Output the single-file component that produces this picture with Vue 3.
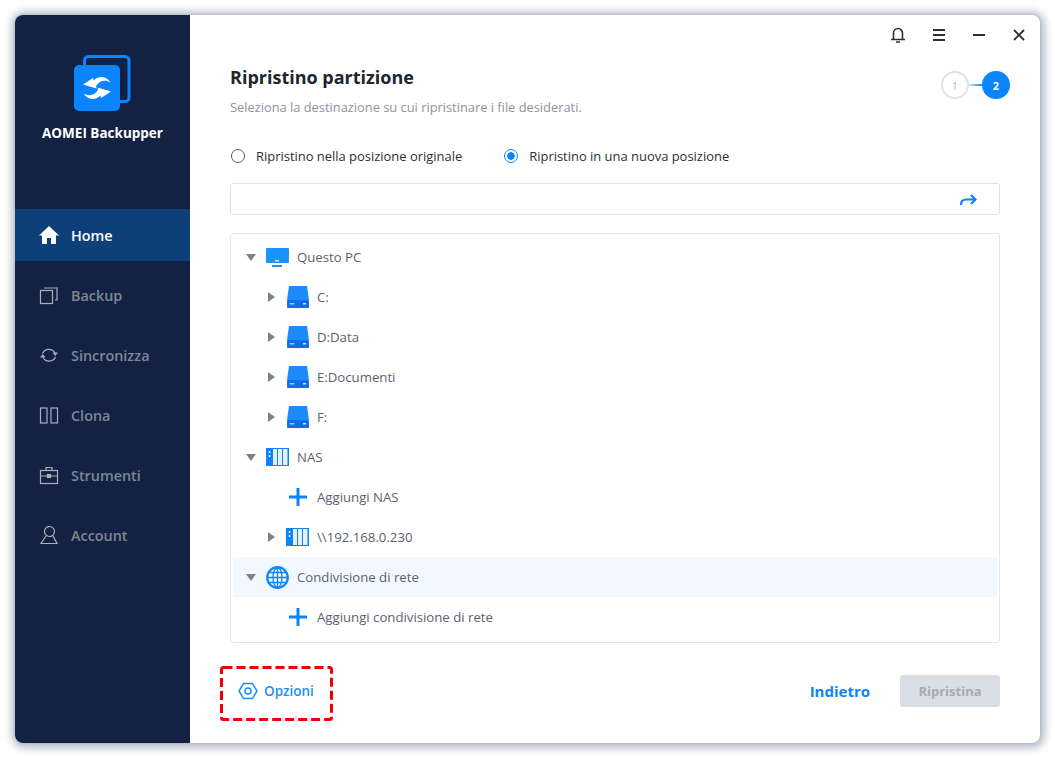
<script setup>
const navItems = [
  { name: 'Home', icon: 'home', active: true },
  { name: 'Backup', icon: 'backup' },
  { name: 'Sincronizza', icon: 'sync' },
  { name: 'Clona', icon: 'clone' },
  { name: 'Strumenti', icon: 'tools' },
  { name: 'Account', icon: 'account' },
]

const treeRows = [
  { label: 'Questo PC', icon: 'pc', level: 0, arrow: 'down' },
  { label: 'C:', icon: 'disk', level: 1, arrow: 'right' },
  { label: 'D:Data', icon: 'disk', level: 1, arrow: 'right' },
  { label: 'E:Documenti', icon: 'disk', level: 1, arrow: 'right' },
  { label: 'F:', icon: 'disk', level: 1, arrow: 'right' },
  { label: 'NAS', icon: 'nas', level: 0, arrow: 'down' },
  { label: 'Aggiungi NAS', icon: 'plus', level: 1 },
  { label: '\\\\192.168.0.230', icon: 'nas', level: 1, arrow: 'right' },
  { label: 'Condivisione di rete', icon: 'globe', level: 0, arrow: 'down', selected: true },
  { label: 'Aggiungi condivisione di rete', icon: 'plus', level: 1 },
]
</script>

<template>
  <div class="page">
    <div class="window">
      <aside class="sidebar">
        <div class="logo">
          <svg width="57" height="57" viewBox="0 0 57 57">
            <path d="M10.500 10V5.500a4 4 0 0 1 4-4H51a4 4 0 0 1 4 4V42.500a4 4 0 0 1-4 4H46" fill="none" stroke="#0a84ff" stroke-width="3" />
            <rect x="0" y="10" width="46" height="46" rx="5" fill="#0a84ff" />
            <g id="sync-arrows">
              <path d="M9 29.500L19 23l.5 2.500C24 20.500 32 20.500 36.500 27.500 31 24.500 25.500 25.500 22 31l.5 2.500z" fill="#fff" />
              <path d="M37 26.500L27 33l-.5-2.500C22 35.500 14 35.500 9.500 28.500 15 31.500 20.500 30.500 24 25l-.5-2.500z" transform="translate(0 10)" fill="#fff" />
            </g>
          </svg>
          <div class="logo-text">AOMEI Backupper</div>
        </div>
        <nav class="nav">
          <div v-for="item in navItems" :key="item.name" class="nav-item" :class="{ active: item.active }">
            <svg class="nav-icon" width="20" height="20" viewBox="0 0 20 20" fill="none" stroke="#a9b0bd" stroke-width="1.200">
              <path v-if="item.icon === 'home'" d="M10 1L0 10.500h3V19h5v-6h4v6h5v-8.500h3z" fill="#fff" stroke="none" />
              <template v-if="item.icon === 'backup'">
                <rect x="1.500" y="5.500" width="12" height="13" />
                <path d="M5 3h13v12h-2" />
              </template>
              <template v-if="item.icon === 'sync'">
                <path d="M3.500 8.500A7 7 0 0 1 16 8M16.500 12A7 7 0 0 1 4 12.500" />
                <path d="M13.500 7.500h5.500l-2.800 3.500zM1 12.500h5.500L3.800 9z" fill="#a9b0bd" stroke="none" />
              </template>
              <template v-if="item.icon === 'clone'">
                <rect x="1.500" y="3" width="6.500" height="15" />
                <rect x="12" y="3" width="6.500" height="15" />
              </template>
              <template v-if="item.icon === 'tools'">
                <rect x="1.500" y="5.500" width="17" height="13" />
                <path d="M7 5.500V2.500h6v3M1.500 11h17" />
                <rect x="8.500" y="9.500" width="3" height="3" fill="#a9b0bd" />
              </template>
              <template v-if="item.icon === 'account'">
                <ellipse cx="10.500" cy="6.500" rx="5" ry="5" transform="rotate(-15 10.500 6.500)" />
                <path d="M7 11L2 18.500h16L14 11" />
              </template>
            </svg>
            <span>{{ item.name }}</span>
          </div>
        </nav>
      </aside>

      <main class="main">
        <div class="topbar">
          <svg width="16" height="16" viewBox="0 0 16 16" fill="none" stroke="#2b3038" stroke-width="1.600">
            <path d="M3.500 12V6a4.500 4.500 0 0 1 9 0v6" />
            <path d="M1 12.500h14" />
            <path d="M6 15h4" />
          </svg>
          <svg width="14" height="14" viewBox="0 0 14 14" stroke="#2b3038" stroke-width="1.800">
            <path d="M1 2h12M1 7h12M1 12h12" />
          </svg>
          <svg width="14" height="14" viewBox="0 0 14 14" stroke="#2b3038" stroke-width="1.800">
            <path d="M1 7h12" />
          </svg>
          <svg width="14" height="14" viewBox="0 0 14 14" stroke="#2b3038" stroke-width="1.800">
            <path d="M2 2l10 10M12 2L2 12" />
          </svg>
        </div>

        <div class="head">
          <div>
            <h1>Ripristino partizione</h1>
            <p class="sub">Seleziona la destinazione su cui ripristinare i file desiderati.</p>
          </div>
          <div class="steps">
            <span class="step">1</span>
            <span class="step-line"></span>
            <span class="step current">2</span>
          </div>
        </div>

        <div class="radios">
          <label class="radio"><span class="dot"></span>Ripristino nella posizione originale</label>
          <label class="radio"><span class="dot on"></span>Ripristino in una nuova posizione</label>
        </div>

        <div class="path-box">
          <svg width="17" height="12" viewBox="0 0 17 12" fill="none" stroke="#0a84ff" stroke-width="2.200">
            <path d="M1 11C1 7 3 5.500 6 5.500h9.500M11 1l4.500 4.500L11 10" />
          </svg>
        </div>

        <div class="tree">
          <div v-for="row in treeRows" :key="row.label" class="row" :class="['lvl' + row.level, { selected: row.selected }]">
            <span class="arrow-slot">
              <i v-if="row.arrow" class="arrow" :class="row.arrow"></i>
            </span>
            <span class="ico">
              <svg v-if="row.icon === 'pc'" width="23" height="19" viewBox="0 0 23 19">
                <rect width="23" height="15" rx="1" fill="#1c93fb" />
                <rect x="9" y="12" width="4" height="1.500" fill="#cfe8ff" />
                <rect x="6" y="17" width="10" height="2" fill="#1c93fb" />
              </svg>
              <svg v-if="row.icon === 'disk'" width="22" height="22" viewBox="0 0 22 22">
                <path d="M2 0h18l2 14H0z" fill="#1e8bfc" />
                <rect y="14" width="22" height="8" rx="1" fill="#0f6fe8" />
                <rect x="2.500" y="17" width="5" height="1.500" fill="#8cc7ff" />
                <rect x="16" y="17" width="3" height="1.500" fill="#cfe8ff" />
              </svg>
              <svg v-if="row.icon === 'nas'" width="23" height="18" viewBox="0 0 23 18">
                <rect width="23" height="18" fill="#0d84f5" />
                <rect x="7" y="1" width="4" height="16" fill="#e4f0fb" />
                <rect x="12" y="1" width="4" height="16" fill="#e4f0fb" />
                <rect x="17" y="1" width="4.500" height="16" fill="#e4f0fb" />
                <path d="M3.500 3v2M3.500 7v2" stroke="#fff" stroke-width="1.500" />
              </svg>
              <svg v-if="row.icon === 'globe'" width="23" height="23" viewBox="0 0 23 23" fill="none" stroke="#0a84ff" stroke-width="1.300">
                <circle cx="11.500" cy="11.500" r="10.300" stroke-width="2.200" />
                <ellipse cx="11.500" cy="11.500" rx="4.500" ry="10" />
                <path d="M11.500 1.500v20M1.500 11.500h20M3 6.500h17M3 16.500h17" />
              </svg>
              <svg v-if="row.icon === 'plus'" width="20" height="20" viewBox="0 0 20 20" stroke="#0a84ff" stroke-width="3">
                <path d="M10 1v18M1 10h18" />
              </svg>
            </span>
            <span class="label">{{ row.label }}</span>
          </div>
        </div>

        <div class="footer">
          <div class="options">
            <svg class="dashes" width="113" height="55" viewBox="0 0 113 55" fill="none" stroke="#f00000" stroke-width="3">
              <rect x="1.500" y="1.500" width="110" height="52" rx="2" stroke-dasharray="9 4" />
            </svg>
            <svg width="20" height="18" viewBox="0 0 20 18" fill="none" stroke="#1c8ffb" stroke-width="1.500">
              <path d="M5.500 1.500h9L19 9l-4.500 7.500h-9L1 9z" />
              <circle cx="10" cy="9" r="3" />
            </svg>
            <span>Opzioni</span>
          </div>
          <div class="actions">
            <a class="back">Indietro</a>
            <button class="restore" disabled>Ripristina</button>
          </div>
        </div>
      </main>
    </div>
  </div>
</template>

<style>
body {
  background: #fff;
}
</style>

<style scoped>
.page {
  width: 1055px;
  height: 758px;
  padding: 15px;
  box-sizing: border-box;
  font-family: "Open Sans", "Noto Sans", sans-serif;
  overflow: hidden;
}
.window {
  width: 1025px;
  height: 728px;
  display: flex;
  border-radius: 8px;
  background: #fff;
  box-shadow: 0 0 2px #9aa2b3, 1px 1px 8px 3px #b4bbc9, 0 0 14px #d5d9e1;
  overflow: hidden;
}
.sidebar {
  width: 175px;
  flex-shrink: 0;
  background: #132242;
}
.logo {
  height: 194px;
  padding-top: 40px;
  box-sizing: border-box;
  display: flex;
  flex-direction: column;
  align-items: center;
  color: #fff;
}
.logo-text {
  margin-top: 12px;
  font-size: 13.500px;
  font-weight: 700;
  white-space: nowrap;
}
.nav-item {
  height: 60px;
  display: flex;
  align-items: center;
  padding-left: 24px;
  font-size: 14.400px;
  font-weight: 600;
  color: #7d8796;
}
.nav-item.active {
  height: 52px;
  margin-bottom: 4px;
  background: #0f3f78;
  color: #fff;
}
.nav-icon {
  margin-right: 12px;
}
.main {
  flex: 1;
  padding: 0 40px;
  display: flex;
  flex-direction: column;
  min-width: 0;
}
.topbar {
  height: 40px;
  margin-right: -26px;
  display: flex;
  justify-content: flex-end;
  align-items: center;
  gap: 26px;
}
.head {
  display: flex;
  justify-content: space-between;
  margin-top: 11px;
  height: 65px;
}
h1 {
  margin: 0;
  font-size: 18px;
  line-height: 23px;
  font-weight: 700;
  color: #20252d;
}
.sub {
  margin: 10px 0 0;
  font-size: 12.850px;
  line-height: 16px;
  color: #8c93a0;
}
.steps {
  display: flex;
  align-items: center;
  height: 28px;
  margin-top: 5px;
  margin-right: -10px;
}
.step {
  width: 28px;
  height: 28px;
  border-radius: 50%;
  border: 2px solid #dfe3ea;
  box-sizing: border-box;
  font-size: 11px;
  color: #b3b8c2;
  display: flex;
  align-items: center;
  justify-content: center;
}
.step.current {
  background: #0a84ff;
  border-color: #0a84ff;
  color: #fff;
  font-weight: 700;
}
.step-line {
  width: 13px;
  height: 2px;
  background: linear-gradient(90deg, #dfe3ea, #0a84ff);
}
.radios {
  display: flex;
  gap: 41px;
  margin-top: 14px;
  height: 22px;
  align-items: center;
}
.radio {
  display: flex;
  align-items: center;
  font-size: 12.950px;
  color: #2a2f3a;
  padding-left: 1px;
}
.dot {
  width: 14px;
  height: 14px;
  box-sizing: border-box;
  border: 1.500px solid #555b66;
  border-radius: 50%;
  margin-right: 11px;
}
.dot.on {
  border-color: #0a84ff;
  background: radial-gradient(circle, #0a84ff 0 3.500px, #fff 4px);
}
.path-box {
  margin-top: 16px;
  height: 32px;
  box-sizing: border-box;
  border: 1px solid #dfe2e8;
  border-radius: 3px;
  display: flex;
  align-items: center;
  justify-content: flex-end;
  padding: 2px 22px 0 0;
}
.tree {
  margin-top: 18px;
  height: 410px;
  box-sizing: border-box;
  border: 1px solid #e4e6eb;
  border-radius: 3px;
  padding: 3px 1px 0 2px;
}
.row {
  height: 40px;
  display: flex;
  align-items: center;
  font-size: 13.200px;
  color: #5a6270;
}
.row.selected {
  background: #f1f8fe;
}
.arrow-slot {
  width: 32px;
  box-sizing: border-box;
  flex-shrink: 0;
  display: flex;
  padding-left: 12.500px;
}
.lvl1 .arrow-slot {
  margin-left: 21px;
  padding-left: 13.500px;
}
.ico {
  width: 24px;
  margin-right: 8px;
  flex-shrink: 0;
  display: flex;
  justify-content: center;
  align-items: center;
}
.lvl1 .ico {
  width: 23px;
}
.arrow {
  display: block;
  width: 0;
  height: 0;
}
.arrow.down {
  border-left: 5.500px solid transparent;
  border-right: 5.500px solid transparent;
  border-top: 7px solid #7c828d;
}
.arrow.right {
  border-top: 5.500px solid transparent;
  border-bottom: 5.500px solid transparent;
  border-left: 7px solid #7c828d;
}
.label {
  white-space: nowrap;
}
.footer {
  flex: 1;
  display: flex;
  justify-content: space-between;
  align-items: flex-start;
}
.options {
  position: relative;
  width: 113px;
  height: 55px;
  margin-top: 23px;
  margin-left: -10px;
  display: flex;
  align-items: center;
  gap: 6px;
  padding: 0 0 5px 18px;
  box-sizing: border-box;
  font-size: 13.500px;
  font-weight: 600;
  color: #1c8ffb;
}
.dashes {
  position: absolute;
  left: 0;
  top: 0;
}
.actions {
  display: flex;
  align-items: center;
  margin-top: 32px;
  gap: 30px;
}
.back {
  font-size: 15px;
  font-weight: 700;
  color: #0a84ff;
}
.restore {
  width: 100px;
  height: 32px;
  border: 0;
  border-radius: 3px;
  background: #d9dde4;
  color: #a5abb6;
  font-family: inherit;
  font-size: 13px;
  font-weight: 700;
}
</style>
